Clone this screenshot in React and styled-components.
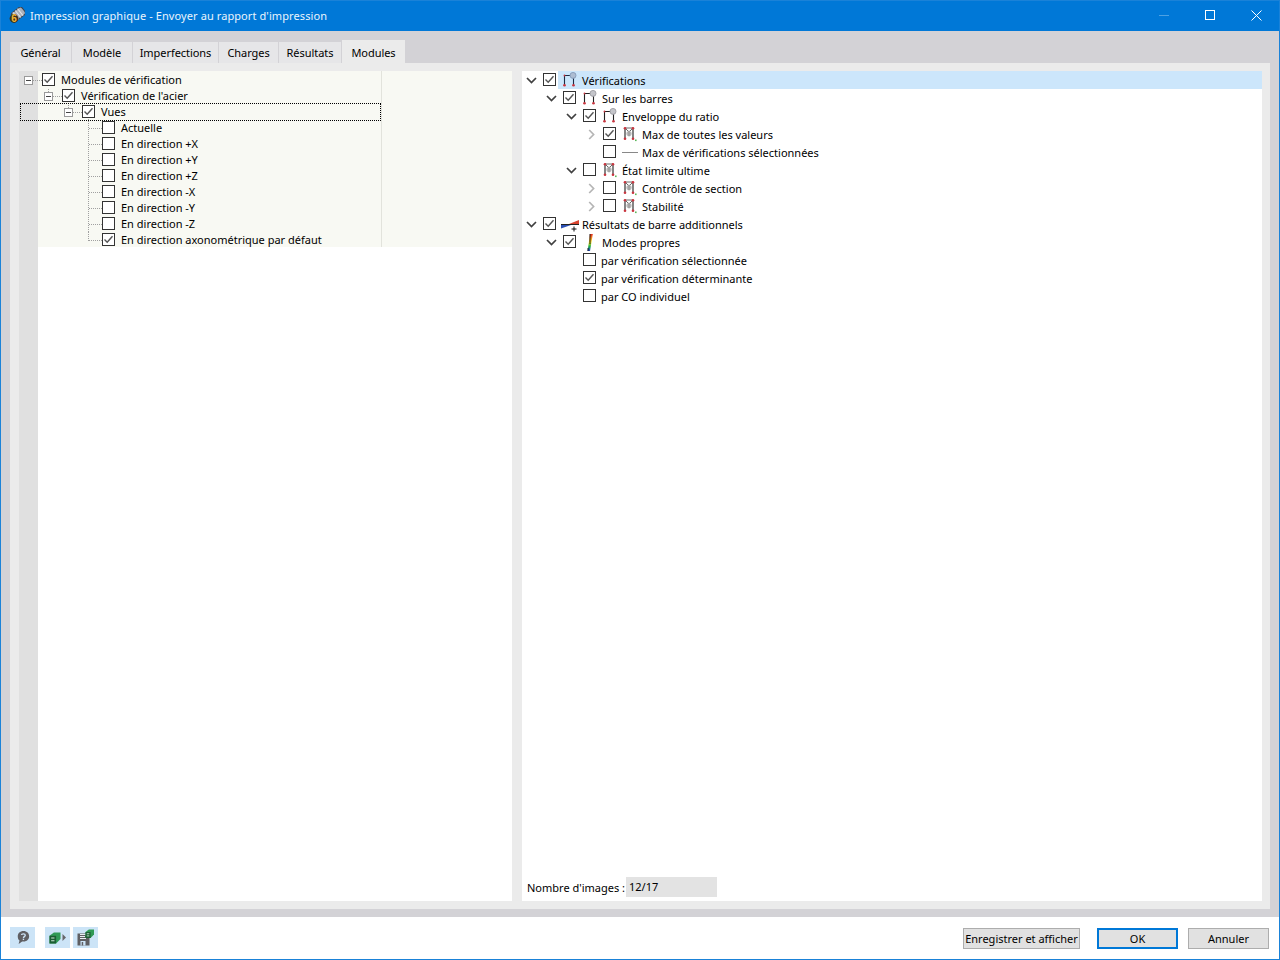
import React from "react";
import styled, { createGlobalStyle } from "styled-components";

const Global = createGlobalStyle`
  html, body { margin: 0; padding: 0; background: #fff; }
  * { box-sizing: border-box; }
  body { font-family: "Noto Sans", "Open Sans", sans-serif; font-size: 11px; color: #000; }
`;

const Window = styled.div`
  width: 1280px; height: 960px; border: 1px solid #1a82d8; display: flex; flex-direction: column; background: #fff; overflow: hidden;
`;
const TitleBar = styled.header`
  height: 30px; background: #0078d7; color: #fff; display: flex; align-items: center; padding: 0 0 2px 8px; flex: none;
`;
const TitleText = styled.span`
  font-size: 11px; margin-left: 5px; flex: 1; letter-spacing: 0.09px; color: #eaf4fc;
`;
const WinButton = styled.div`
  width: 46px; height: 28px; display: flex; align-items: center; justify-content: center; flex: none;
`;
const Main = styled.main`
  flex: 1; background: #d3d2d6; padding: 9px 9px 8px; display: flex; flex-direction: column; min-height: 0;
`;
const Tabs = styled.nav`
  display: flex; gap: 1px; height: 23px; align-items: flex-end; flex: none;
`;
const Tab = styled.div`
  width: ${p => p.$w}px; height: ${p => (p.$active ? 23 : 21)}px;
  background: ${p => (p.$active ? "#ebebeb" : "#e6e6e8")};
  display: flex; align-items: center; justify-content: center; padding-top: ${p => (p.$active ? 2 : 0)}px;
  font-size: 11px; letter-spacing: -0.05px;
`;
const Panel = styled.section`
  flex: 1; background: #ebebeb; padding: 8px 8px 8px 9px; display: flex; gap: 10px; min-height: 0;
`;
const LeftPane = styled.div`
  width: 493px; background: linear-gradient(to right, #e0e0e0 19px, #fff 19px);
`;
const TreeBlock = styled.div`
  height: 176px; background: linear-gradient(to right, transparent 19px, #f8f9f3 19px);
`;
const TreeColumn = styled.div`
  width: 363px; height: 176px; padding-top: 1px; border-right: 1px solid #e2e3dc;
`;
const LRow = styled.div`
  height: 16px; position: relative; display: flex; align-items: flex-start; padding-left: ${p => p.$pad}px;
  ${p => p.$focus && `
    &::after { content: ""; position: absolute; left: 1px; right: 0; top: -1px; height: 16px; border: 1px dotted #000; pointer-events: none; }
  `}
`;
const LLabel = styled.span`
  line-height: 16px; margin-left: 6px; white-space: nowrap;
`;
const Expander = styled.span`
  width: 9px; height: 9px; margin-top: 4px; border: 1px solid #9a9a9a; background: #fff; position: relative; flex: none;
  &::before { content: ""; position: absolute; left: 1px; right: 1px; top: 3px; height: 1px; background: #444; }
  &::after { content: ""; position: absolute; left: 3px; top: -4px; height: 3px; border-left: 1px dotted ${p => (p.$stem ? "#a0a0a0" : "transparent")}; }
`;
const Dots = styled.span`
  width: 9px; height: 1px; margin-top: 8px; border-top: 1px dotted #a0a0a0; flex: none;
`;
const Branch = styled.span`
  width: 14px; height: 16px; flex: none; position: relative;
  &::before { content: ""; position: absolute; left: 0; top: -1px; height: ${p => (p.$last ? 10 : 17)}px; border-left: 1px dotted #a0a0a0; }
  &::after { content: ""; position: absolute; left: 1px; right: 0; top: 8px; border-top: 1px dotted #a0a0a0; }
`;
const Box = styled.span`
  width: 13px; height: 13px; margin-top: ${p => p.$mt ?? 1}px; border: 1px solid #333; background: #fff; flex: none; display: flex; align-items: center; justify-content: center;
`;
const RightPane = styled.div`
  width: 740px; background: #fff; display: flex; flex-direction: column;
`;
const RRow = styled.div`
  height: 18px; display: flex; padding-left: ${p => p.$level * 20}px;
`;
const ChevronSlot = styled.span`
  width: 19px; height: 18px; flex: none; display: flex; align-items: center; justify-content: center; margin-right: 2px;
`;
const RBody = styled.div`
  flex: 1; height: 18px; margin-left: 2px; padding-left: ${p => (p.$plain ? 3 : 2)}px; display: flex; align-items: center;
  background: ${p => (p.$selected ? "#cce6fb" : "transparent")};
`;
const IconSlot = styled.span`
  width: 20px; height: 18px; flex: none; display: flex; align-items: center; justify-content: center; margin-right: 2px;
`;
const RLabel = styled.span`
  white-space: nowrap; line-height: 18px; padding-top: 2px;
`;
const FooterRow = styled.div`
  margin-top: auto; height: 24px; padding: 0 0 4px 5px; display: flex; align-items: center;
`;
const CountLabel = styled.span`
  width: 99px; white-space: nowrap;
`;
const CountField = styled.div`
  width: 91px; height: 20px; background: #e3e3e3; padding-left: 3px; line-height: 20px;
`;
const Footer = styled.footer`
  height: 42px; flex: none; display: flex; padding: 10px 10px 0 9px; background: #fff;
`;
const IconGroup = styled.div`
  display: flex; gap: 3px; margin-left: ${p => p.$ml || 0}px;
`;
const IconButton = styled.div`
  width: 25px; height: 21px; background: #cce4f7; display: flex; align-items: center; justify-content: center;
`;
const Spacer = styled.div`flex: 1;`;
const Buttons = styled.div`
  display: flex; margin-top: 1px; height: 21px;
`;
const Button = styled.div`
  width: ${p => p.$w}px; height: 21px; margin-left: ${p => p.$ml || 0}px;
  background: #e1e1e1; border: ${p => (p.$primary ? "2px solid #0078d7" : "1px solid #adadad")};
  display: flex; align-items: center; justify-content: center; font-size: 11px; white-space: nowrap;
`;

const Check = () => (
  <svg width="11" height="11" viewBox="0 0 11 11"><path d="M1.5 5.5 L4.2 8.2 L9.5 2.2" fill="none" stroke="#555" strokeWidth="1.4" /></svg>
);
const CheckBox = ({ on, mt }) => <Box $mt={mt}>{on && <Check />}</Box>;

const Chevron = ({ open }) => open ? (
  <svg width="11" height="7" viewBox="0 0 11 7"><path d="M1 1 L5.5 5.5 L10 1" fill="none" stroke="#404040" strokeWidth="1.7" /></svg>
) : (
  <svg width="7" height="11" viewBox="0 0 7 11"><path d="M1.2 1 L5.6 5.5 L1.2 10" fill="none" stroke="#b5b5b5" strokeWidth="1.7" /></svg>
);

const Frame = ({ blue }) => (
  <svg width="16" height="16" viewBox="0 0 16 16">
    <path d="M2.5 13.5 V3.5 H11.5 V13.5" fill="none" stroke={blue ? "#1c2c44" : "#222"} strokeWidth="1.1" />
    <circle cx="11" cy="3.4" r="3" fill={blue ? "#aebdd2" : "#c4c5ca"} stroke={blue ? "#7f95b5" : "#96969c"} strokeWidth="0.8" />
    <g fill="#c8353f"><circle cx="2.5" cy="3.5" r="0.9" /><circle cx="2.5" cy="13.2" r="1.3" /><circle cx="11.5" cy="13.2" r="1.3" /></g>
  </svg>
);
const MaxIcon = () => (
  <svg width="16" height="16" viewBox="0 0 16 16">
    <path d="M3 13 V2 M11 13 V2" stroke="#222" strokeWidth="1.1" />
    <path d="M3 2 H11 M3 2 L7 6 L11 2" fill="none" stroke="#444" strokeWidth="0.8" />
    <circle cx="7" cy="7.5" r="2.6" fill="#b8b8b8" />
    <path d="M7 4.5 V10.5" stroke="#888" strokeWidth="0.8" />
    <g fill="#c8353f"><circle cx="3" cy="2.2" r="1.3" /><circle cx="11" cy="2.2" r="1.3" /><circle cx="3" cy="12.8" r="1.3" /><circle cx="11" cy="12.8" r="1.3" /></g>
    <rect x="13" y="13.5" width="1.6" height="1.6" fill="#5cb85c" />
  </svg>
);
const LineIcon = () => (
  <svg width="16" height="3" viewBox="0 0 16 3"><path d="M0 1.5 H16" stroke="#888" strokeWidth="1" /></svg>
);
const BeamIcon = () => (
  <svg width="18" height="16" viewBox="0 0 18 16">
    <path d="M8 8 L18 4 V8 Z" fill="#d9442f" />
    <path d="M0 8 H18 V9 H0 Z" fill="#222" />
    <path d="M0 9 H10 L0 12.5 Z" fill="#2b4fb3" />
    <path d="M13 10.5 V15.5 M10.5 13 H15.5" stroke="#111" strokeWidth="1" />
  </svg>
);
const ModesIcon = () => (
  <svg width="6" height="17" viewBox="0 0 6 17">
    <defs><linearGradient id="rb" x1="0" y1="0" x2="0" y2="1">
      <stop offset="0" stopColor="#e02b20" /><stop offset=".3" stopColor="#f4a020" /><stop offset=".5" stopColor="#e8e020" /><stop offset=".72" stopColor="#20b040" /><stop offset="1" stopColor="#2040d0" />
    </linearGradient></defs>
    <path d="M3 0 H5.8 L3 17 H0.6 Z" fill="url(#rb)" />
    <path d="M3 0 V10 M1 14 V17" stroke="#111" strokeWidth="0.9" />
  </svg>
);
const AppIcon = () => (
  <svg width="16" height="16" viewBox="0 0 16 16">
    <g transform="rotate(-38 9 7)">
      <rect x="3" y="2.5" width="13" height="9" rx="2.5" fill="#aab0ba" stroke="#3d4148" strokeWidth="1" />
      <path d="M6 2.5 V11.5 M9 2.5 V11.5 M12 2.5 V11.5" stroke="#e3e6ea" strokeWidth="1" />
    </g>
    <circle cx="5" cy="11.5" r="4.4" fill="#3b3420" />
    <text x="5" y="15" fontSize="10" fontWeight="700" textAnchor="middle" fill="#f2b632" fontFamily="Liberation Sans, sans-serif">6</text>
  </svg>
);
const HelpIcon = () => (
  <svg width="14" height="15" viewBox="0 0 16 17">
    <path d="M8.5 1 C12.5 1 15 3.6 15 7 C15 10.6 12.3 13 9 13 L7 13 L3 16 L4 11.8 C2.5 10.7 2 9 2 7 C2 3.6 4.6 1 8.5 1 Z" fill="#5f5f63" />
    <path d="M6.2 5.6 C6.4 4 10.6 3.8 10.6 6 C10.6 7.6 8.5 7.4 8.5 9" fill="none" stroke="#cce4f7" strokeWidth="1.5" />
    <rect x="7.7" y="9.8" width="1.6" height="1.6" fill="#cce4f7" />
  </svg>
);
const Cube = ({ x = 0, y = 0, s = 1 }) => (
  <g transform={`translate(${x} ${y}) scale(${s})`}>
    <path d="M0 3 L4 0 H10 V6 L6 10 H0 Z" fill="#2f9a55" />
    <path d="M0 3 H6 V10 H0 Z" fill="#1b5e33" />
    <path d="M1.5 5 H4.5 M1.5 7.5 H4.5" stroke="#cfe8d8" strokeWidth="1" />
  </g>
);
const CubeArrowIcon = () => (
  <svg width="20" height="14" viewBox="0 0 20 14">
    <Cube x={1.5} y={1.5} s={1.1} />
    <path d="M14.5 3 L18 6.5 L14.5 10 Z" fill="#66666a" />
  </svg>
);
const SaveCubeIcon = () => (
  <svg width="20" height="18" viewBox="0 0 20 18">
    <path d="M1.5 4.5 H12.5 L13.5 5.5 V16.5 H1.5 Z" fill="#5f5f63" />
    <path d="M4 5.5 H10 M4 7.5 H9 M4 9.5 H10" stroke="#e8eef3" strokeWidth="1" />
    <rect x="4.5" y="12" width="5" height="4.5" fill="#cce4f7" />
    <rect x="5.7" y="13" width="1.5" height="3.5" fill="#5f5f63" />
    <Cube x={9.5} y={0.5} s={0.85} />
  </svg>
);

const LEFT = [
  { t: "Actuelle" },
  { t: "En direction +X" },
  { t: "En direction +Y" },
  { t: "En direction +Z" },
  { t: "En direction -X" },
  { t: "En direction -Y" },
  { t: "En direction -Z" },
  { t: "En direction axonométrique par défaut", on: true, last: true },
];

const RIGHT = [
  { l: 0, ch: "open", on: true, i: "frameBlue", t: "Vérifications", sel: true },
  { l: 1, ch: "open", on: true, i: "frame", t: "Sur les barres" },
  { l: 2, ch: "open", on: true, i: "frame", t: "Enveloppe du ratio" },
  { l: 3, ch: "closed", on: true, i: "max", t: "Max de toutes les valeurs" },
  { l: 3, i: "line", t: "Max de vérifications sélectionnées" },
  { l: 2, ch: "open", i: "max", t: "État limite ultime" },
  { l: 3, ch: "closed", i: "max", t: "Contrôle de section" },
  { l: 3, ch: "closed", i: "max", t: "Stabilité" },
  { l: 0, ch: "open", on: true, i: "beam", t: "Résultats de barre additionnels" },
  { l: 1, ch: "open", on: true, i: "modes", t: "Modes propres" },
  { l: 2, t: "par vérification sélectionnée" },
  { l: 2, on: true, t: "par vérification déterminante" },
  { l: 2, t: "par CO individuel" },
];

const ICONS = {
  frameBlue: <Frame blue />,
  frame: <Frame />,
  max: <MaxIcon />,
  line: <LineIcon />,
  beam: <BeamIcon />,
  modes: <ModesIcon />,
};

const TABS = [["Général", 61], ["Modèle", 60], ["Imperfections", 85], ["Charges", 59], ["Résultats", 62], ["Modules", 63, true]];

export default function App() {
  return (
    <>
      <Global />
      <Window>
        <TitleBar>
          <AppIcon />
          <TitleText>Impression graphique - Envoyer au rapport d'impression</TitleText>
          <WinButton><svg width="10" height="1"><rect width="10" height="1" fill="#4da1e3" /></svg></WinButton>
          <WinButton><svg width="10" height="10"><rect x=".5" y=".5" width="9" height="9" fill="none" stroke="#fff" /></svg></WinButton>
          <WinButton><svg width="11" height="11"><path d="M.5 .5 L10.5 10.5 M10.5 .5 L.5 10.5" stroke="#fff" /></svg></WinButton>
        </TitleBar>
        <Main>
          <Tabs>
            {TABS.map(([t, w, a]) => <Tab key={t} $w={w} $active={a}>{t}</Tab>)}
          </Tabs>
          <Panel>
            <LeftPane>
              <TreeBlock>
                <TreeColumn>
                  <LRow $pad={5}>
                    <Expander />
                    <Dots />
                    <CheckBox on />
                    <LLabel>Modules de vérification</LLabel>
                  </LRow>
                  <LRow $pad={25}>
                    <Expander $stem />
                    <Dots />
                    <CheckBox on />
                    <LLabel>Vérification de l'acier</LLabel>
                  </LRow>
                  <LRow $pad={45} $focus>
                    <Expander $stem />
                    <Dots />
                    <CheckBox on />
                    <LLabel>Vues</LLabel>
                  </LRow>
                  {LEFT.map(r => (
                    <LRow key={r.t} $pad={69}>
                      <Branch $last={r.last} />
                      <CheckBox on={r.on} />
                      <LLabel>{r.t}</LLabel>
                    </LRow>
                  ))}
                </TreeColumn>
              </TreeBlock>
            </LeftPane>
            <RightPane>
              {RIGHT.map(r => (
                <RRow key={r.t} $level={r.l}>
                  <ChevronSlot>{r.ch && <Chevron open={r.ch === "open"} />}</ChevronSlot>
                  <CheckBox on={r.on} mt={2} />
                  <RBody $selected={r.sel} $plain={!r.i}>
                    {r.i && <IconSlot>{ICONS[r.i]}</IconSlot>}
                    <RLabel>{r.t}</RLabel>
                  </RBody>
                </RRow>
              ))}
              <FooterRow>
                <CountLabel>Nombre d'images :</CountLabel>
                <CountField>12/17</CountField>
              </FooterRow>
            </RightPane>
          </Panel>
        </Main>
        <Footer>
          <IconGroup><IconButton><HelpIcon /></IconButton></IconGroup>
          <IconGroup $ml={10}>
            <IconButton><CubeArrowIcon /></IconButton>
            <IconButton><SaveCubeIcon /></IconButton>
          </IconGroup>
          <Spacer />
          <Buttons>
            <Button $w={117}>Enregistrer et afficher</Button>
            <Button $w={81} $ml={17} $primary>OK</Button>
            <Button $w={81} $ml={10}>Annuler</Button>
          </Buttons>
        </Footer>
      </Window>
    </>
  );
}
